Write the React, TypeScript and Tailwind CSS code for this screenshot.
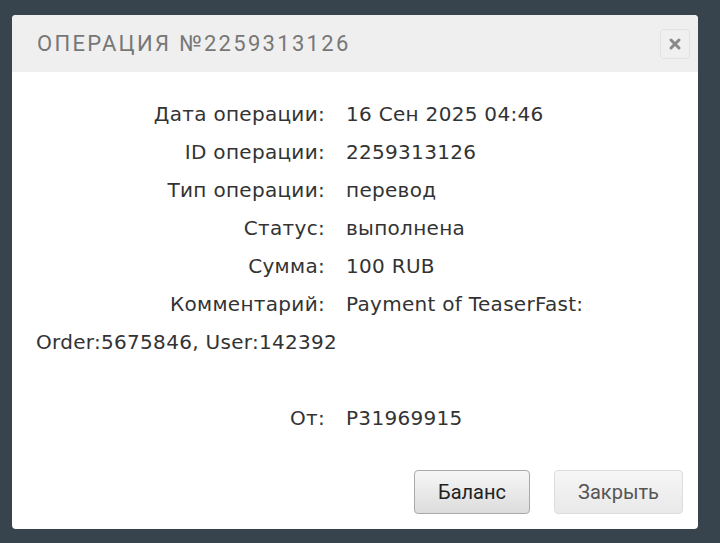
import { X } from 'lucide-react'

// строки с данными операции
const rows = [
  { label: 'Дата операции:', value: '16 Сен 2025 04:46' },
  { label: 'ID операции:', value: '2259313126' },
  { label: 'Тип операции:', value: 'перевод' },
  { label: 'Статус:', value: 'выполнена' },
  { label: 'Сумма:', value: '100 RUB' },
  { label: 'Комментарий:', value: 'Payment of TeaserFast:' },
]

export default function App() {
  return (
    <div className="h-[543px] w-[720px] overflow-hidden bg-[#37444d] pt-[15px] pl-[12px]">
      <div className="w-[686px] h-[514px] bg-white rounded-[4px] flex flex-col overflow-hidden">
        {/* заголовок */}
        <div className="h-[57px] bg-[#efefef] flex items-center justify-between pl-[25px] pr-[8px]">
          <h2
            className="text-[22px] tracking-[2.3px] text-[#777777]"
            style={{ fontFamily: 'Roboto, "Liberation Sans", sans-serif' }}
          >
            ОПЕРАЦИЯ №2259313126
          </h2>
          <button className="w-[30px] h-[30px] rounded-[4px] border border-[#e2e2e2] bg-[#f0f0f0] flex items-center justify-center">
            <X className="w-[16px] h-[16px] text-[#8a8a8a]" strokeWidth={4.5} />
          </button>
        </div>

        {/* тело */}
        <div
          className="flex-1 px-[24px] pt-[23px] text-[20px] leading-[38px] tracking-[0.3px] text-[#333333]"
          style={{ fontFamily: '"DejaVu Sans", "Noto Sans", sans-serif' }}
        >
          {rows.map((r) => (
            <div key={r.label} className="flex">
              <span className="w-[289px] text-right mr-[21px]">{r.label}</span>
              <span>{r.value}</span>
            </div>
          ))}
          <div>Order:5675846, User:142392</div>
          <div className="h-[38px]" />
          <div className="flex">
            <span className="w-[289px] text-right mr-[21px]">От:</span>
            <span>P31969915</span>
          </div>
        </div>

        {/* кнопки */}
        <div
          className="flex justify-end gap-[24px] pr-[15px] pb-[15px]"
          style={{ fontFamily: 'Roboto, "Liberation Sans", sans-serif' }}
        >
          <button className="w-[116px] h-[44px] rounded-[4px] border border-[#a9a9a9] bg-gradient-to-b from-[#f7f7f7] to-[#dcdcdc] text-[20px] text-[#222222]">
            Баланс
          </button>
          <button className="w-[129px] h-[44px] rounded-[4px] border border-[#dddddd] bg-gradient-to-b from-[#f6f6f6] to-[#e9e9e9] text-[20px] text-[#555555]">
            Закрыть
          </button>
        </div>
      </div>
    </div>
  )
}
